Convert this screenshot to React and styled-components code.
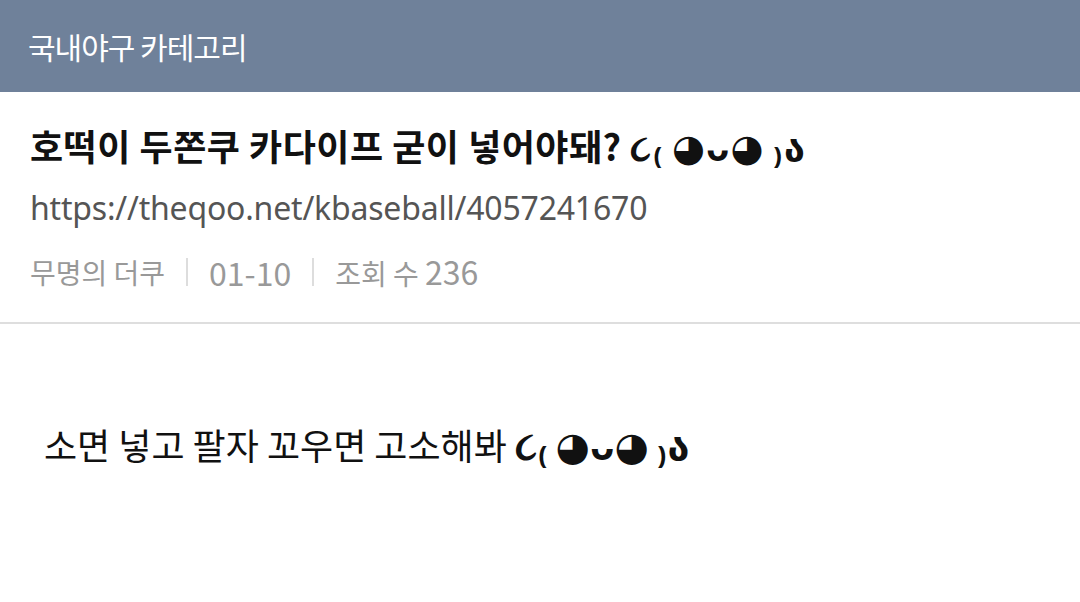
import styled, { createGlobalStyle } from 'styled-components';

const GlobalStyle = createGlobalStyle`
  html, body { margin: 0; padding: 0; background: #fff; }
  body { font-family: "Noto Sans CJK KR", "Noto Sans", "DejaVu Sans", sans-serif; }
`;

const Page = styled.div`
  width: 1080px;
  min-height: 602px;
  background: #fff;
`;

const TopBar = styled.header`
  height: 92px;
  background: #6f819a;
  display: flex;
  align-items: center;
  padding: 0 28px;
  box-sizing: border-box;
  color: #fff;
  font-size: 30px;
  letter-spacing: -1px;
`;

const Head = styled.section`
  padding: 22px 30px 0;
  border-bottom: 2px solid #dedede;
  height: 232px;
  box-sizing: border-box;
`;

const Title = styled.h1`
  margin: 0;
  font-size: 36px;
  font-weight: 700;
  color: #111;
  line-height: 62px;
  letter-spacing: 0.5px;
  white-space: nowrap;
`;

const Url = styled.div`
  font-family: "Noto Sans", sans-serif;
  font-size: 32px;
  color: #555;
  line-height: 64px;
  letter-spacing: -0.2px;
`;

const Meta = styled.div`
  display: flex;
  align-items: center;
  gap: 21px;
  font-size: 28px;
  color: #999;
  line-height: 62px;
`;

const Num = styled.span`
  font-size: 32px;
`;

const Sep = styled.span`
  width: 2px;
  height: 28px;
  background: #dddddd;
`;

const Body = styled.article`
  padding: 94px 44px;
  font-size: 36px;
  line-height: 50px;
  color: #111;
  white-space: nowrap;
`;

const Face = styled.span`
  font-size: ${(p) => p.$scale}em;
  font-weight: 700;
  letter-spacing: ${(p) => p.$spacing}px;
`;

const face = '૮₍ ◕ᴗ◕ ₎ა';

export default function App() {
  return (
    <Page>
      <GlobalStyle />
      <TopBar>국내야구 카테고리</TopBar>
      <Head>
        <Title>
          호떡이 두쫀쿠 카다이프 굳이 넣어야돼? <Face $scale={1.05} $spacing={1}>{face}</Face>
        </Title>
        <Url>https://theqoo.net/kbaseball/4057241670</Url>
        <Meta>
          <span>무명의 더쿠</span>
          <Sep />
          <Num>01-10</Num>
          <Sep />
          <span>
            조회 수 <Num>236</Num>
          </span>
        </Meta>
      </Head>
      <Body>
        소면 넣고 팔자 꼬우면 고소해봐 <Face $scale={1.1} $spacing={0}>{face}</Face>
      </Body>
    </Page>
  );
}
